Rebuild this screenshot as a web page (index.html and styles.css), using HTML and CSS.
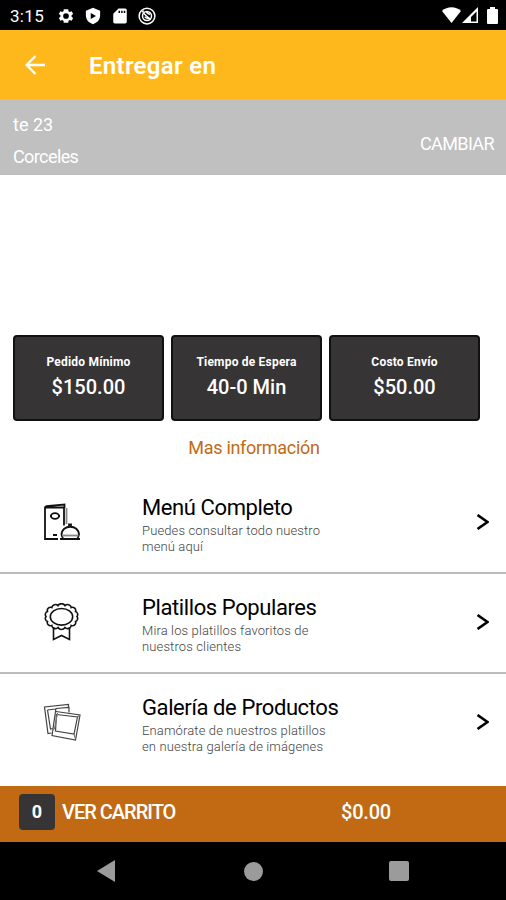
FILE: index.html
```
<!DOCTYPE html>
<html lang="es">
<head>
  <meta charset="UTF-8">
  <meta name="viewport" content="width=device-width, initial-scale=1.0">
  <title>Entregar en</title>
  <link rel="stylesheet" href="styles.css">
</head>
<body>
  <div class="status-bar">
    <span class="clock">3:15</span>
    <div class="status-icons">
      <svg width="18" height="18" viewBox="0 0 24 24"><path fill="#fff" fill-rule="evenodd" d="M19.400 13a7.500 7.500 0 0 0 0-2l2.100-1.700-2-3.500-2.500 1a7.500 7.500 0 0 0-1.700-1L15 3H9l-.3 2.800a7.500 7.500 0 0 0-1.700 1l-2.500-1-2 3.500L4.600 11a7.500 7.500 0 0 0 0 2l-2.100 1.700 2 3.500 2.500-1a7.500 7.500 0 0 0 1.700 1L9 21h6l.3-2.800a7.500 7.500 0 0 0 1.700-1l2.500 1 2-3.500zM12 8.200a3.800 3.800 0 1 1 0 7.600 3.800 3.800 0 0 1 0-7.600z"/></svg>
      <svg width="18" height="18" viewBox="0 0 24 24"><path fill="#fff" fill-rule="evenodd" d="M12 1l9.500 4v6c0 6-4 10-9.500 12-5.500-2-9.500-6-9.500-12V5zM9 8v8l7-4z"/></svg>
      <svg width="18" height="18" viewBox="0 0 24 24"><path fill="#fff" fill-rule="evenodd" d="M10 2h9c1 0 2 1 2 2v16c0 1-1 2-2 2H5c-1 0-2-1-2-2V9zM10 5v3h2V5zM13.500 5v3h2V5zM17 5v3h2V5z"/></svg>
      <svg width="18" height="18" viewBox="0 0 24 24" fill="none" stroke="#fff" stroke-width="2"><circle cx="12" cy="12" r="10.500"/><circle cx="12" cy="12" r="6"/><path d="M5 7l3-2M7 8l10 9M9 13c2 2 4 3 7 2M11 7l5 3"/></svg>
    </div>
    <div class="signal-icons">
      <svg width="19" height="16" viewBox="0 0 19 16"><path fill="#fff" d="M0 4c5-5 14-5 19 0L9.500 16z"/></svg>
      <svg width="16" height="16" viewBox="0 0 16 16"><path fill="#fff" fill-rule="evenodd" d="M0 16L16 0v16zM14.500 14.500V4.500L9 10v4.500z"/></svg>
      <svg class="battery" width="11" height="17" viewBox="0 0 11 17"><path fill="#fff" d="M3 0h5v2h2q1 0 1 1v13q0 1-1 1H1q-1 0-1-1V3q0-1 1-1h2z"/></svg>
    </div>
  </div>

  <header class="app-bar">
    <svg class="back" width="20" height="20" viewBox="0 0 20 20" fill="none" stroke="#fff" stroke-width="2.300"><path d="M20 10H2M10.500 1L1.600 10l8.900 9"/></svg>
    <h1>Entregar en</h1>
  </header>

  <section class="address">
    <div class="address-lines">
      <div><span class="street">te 23</span></div>
      <div><span class="suburb">Corceles</span></div>
    </div>
    <span class="change">CAMBIAR</span>
  </section>

  <main>
    <div class="cards">
      <div class="card">
        <span class="label">Pedido Mínimo</span>
        <span class="value">$150.00</span>
      </div>
      <div class="card">
        <span class="label">Tiempo de Espera</span>
        <span class="value">40-0 Min</span>
      </div>
      <div class="card">
        <span class="label">Costo Envío</span>
        <span class="value">$50.00</span>
      </div>
    </div>
    <div class="more"><span>Mas información</span></div>

    <div class="menu">
      <div class="item">
        <svg class="icon" width="38" height="38" viewBox="0 0 38 38" fill="none" stroke="#111" stroke-width="1.800">
          <path d="M15 36H2V4.500h19v18M2 4.500L3.500 3 21.500 1.500V5"/>
          <path stroke="#888" d="M23.500 5v16"/>
          <ellipse cx="12" cy="13" rx="4" ry="2.800"/>
          <path d="M7 13h1.500M15.500 13H17M10 32h4"/>
          <path d="M18.500 32c0-11 17.500-11 17.500 0M26 23v-1.500h2V23M17 36h20M18.500 32l1.500 3.500M36 32l-1.500 3.500"/>
          <path stroke="#888" d="M19 32.500h16.500"/>
        </svg>
        <div class="text">
          <h2 class="name">Menú Completo</h2>
          <p>Puedes consultar todo nuestro<br>menú aquí</p>
        </div>
        <svg class="chevron" width="12" height="16" viewBox="0 0 12 16" fill="none" stroke="#000" stroke-width="2.600"><path d="M.5 1L10.500 8l-10 7"/></svg>
      </div>
      <div class="item">
        <svg class="icon" width="38" height="38" viewBox="0 0 38 38" fill="none" stroke="#111" stroke-width="1.600">
          <path d="M34 13.500A3.200 3.200 0 0 1 32.500 18.500A3.200 3.200 0 0 1 28.200 22.500A3.600 3.600 0 0 1 22 24.500A4 4 0 0 1 15 24.500A3.600 3.600 0 0 1 8.800 22.500A3.200 3.200 0 0 1 4.500 18.500A3.200 3.200 0 0 1 3 13.500A3.200 3.200 0 0 1 4.500 8.500A3.200 3.200 0 0 1 8.800 4.500A3.600 3.600 0 0 1 15 2.700A4 4 0 0 1 22 2.700A3.600 3.600 0 0 1 28.200 4.500A3.200 3.200 0 0 1 32.500 8.500A3.200 3.200 0 0 1 34 13.500z"/>
          <ellipse cx="18.500" cy="13.800" rx="11.200" ry="8.300"/>
          <path d="M10.500 24v12.500l8-4 8 4V24"/>
        </svg>
        <div class="text">
          <h2 class="name">Platillos Populares</h2>
          <p>Mira los platillos favoritos de<br>nuestros clientes</p>
        </div>
        <svg class="chevron" width="12" height="16" viewBox="0 0 12 16" fill="none" stroke="#000" stroke-width="2.600"><path d="M.5 1L10.500 8l-10 7"/></svg>
      </div>
      <div class="item">
        <svg class="icon" width="38" height="38" viewBox="0 0 38 38" fill="none" stroke="#444" stroke-width="1.200">
          <path d="M12.500 8.500l.5-3 13-1v5M25.500 5V1.500L1.500 4 5 30.500l3.500-.5M4.500 7L7.500 26l2-.5M4.500 7l8-1"/>
          <path d="M13 8.500L37 12l-4.500 25L9 32.500 12.500 8.500zM13.500 11.500L34.500 14l-3.500 17-18.500-3z"/>
          <path stroke="#777" d="M14.500 10l-3 15.500L9 28M31 31l1.500 5M34.500 14L37 12"/>
        </svg>
        <div class="text">
          <h2 class="name">Galería de Productos</h2>
          <p>Enamórate de nuestros platillos<br>en nuestra galería de imágenes</p>
        </div>
        <svg class="chevron" width="12" height="16" viewBox="0 0 12 16" fill="none" stroke="#000" stroke-width="2.600"><path d="M.5 1L10.500 8l-10 7"/></svg>
      </div>
    </div>
  </main>

  <div class="cart">
    <span class="count">0</span>
    <span class="cart-label">VER CARRITO</span>
    <span class="total">$0.00</span>
  </div>

  <nav class="nav-bar">
    <svg width="18" height="22" viewBox="0 0 18 22"><path fill="#9b9b9b" d="M18 0v22L0 11z"/></svg>
    <span class="home"></span>
    <span class="recent"></span>
  </nav>
</body>
</html>
```
FILE: styles.css
```
* {
  box-sizing: border-box;
}
body {
  margin: 0;
  width: 506px;
  height: 900px;
  display: flex;
  flex-direction: column;
  overflow: hidden;
  background-color: #fff;
  font-family: Roboto, "Open Sans", sans-serif;
}
h1, h2, p {
  margin: 0;
}
span {
  white-space: nowrap;
}
svg {
  display: block;
  flex-shrink: 0;
}
.status-bar {
  height: 30px;
  display: flex;
  align-items: center;
  padding: 1px 8px 0 10px;
  background-color: #000;
  color: #fff;
}
.clock {
  width: 47px;
  font-size: 17px;
  font-weight: 400;
  letter-spacing: 0.3px;
}
.status-icons {
  display: flex;
  gap: 9px;
}
.signal-icons {
  display: flex;
  gap: 1px;
  margin-left: auto;
}
.battery {
  margin-left: 8px;
}
.app-bar {
  height: 69px;
  display: flex;
  align-items: center;
  padding-left: 25px;
  background-color: #ffb81c;
  color: #fff;
}
.app-bar h1 {
  margin-left: 44px;
  padding-top: 2px;
  font-size: 24px;
  font-weight: 600;
  letter-spacing: 0.3px;
}
.address {
  height: 76px;
  display: flex;
  align-items: center;
  justify-content: space-between;
  padding: 0 12px 0 13px;
  background-color: #c0c0c0;
  color: #fff;
  font-size: 18px;
}
.address-lines {
  margin-top: 8px;
  line-height: 32px;
}
.suburb {
  letter-spacing: -0.6px;
}
.change {
  padding-top: 12px;
  letter-spacing: -0.6px;
}
main {
  height: 611px;
  padding-top: 160px;
}
.cards {
  display: flex;
  gap: 7px;
  padding-left: 13px;
}
.card {
  width: 151px;
  height: 86px;
  padding-top: 17px;
  display: flex;
  flex-direction: column;
  align-items: center;
  border: 2px solid #111;
  border-radius: 4px;
  background-color: #373435;
  color: #fff;
}
.label {
  font-size: 12px;
  font-weight: 700;
  line-height: 16px;
  letter-spacing: 0.2px;
}
.value {
  margin-top: 4px;
  font-size: 20px;
  font-weight: 500;
  line-height: 26px;
}
.more {
  height: 52px;
  padding: 14px 0 0 2px;
  text-align: center;
  color: #c26a15;
  font-size: 18px;
  line-height: 26px;
  letter-spacing: -0.3px;
}
.menu {
  padding-top: 1px;
}
.item {
  height: 100px;
  display: flex;
  align-items: center;
  padding: 0 17px 2px 43px;
  border-bottom: 2px solid #bbb;
}
.item:last-child {
  border-bottom-color: transparent;
}
.text {
  width: 300px;
  margin-left: 61px;
}
.name {
  padding-top: 3px;
  font-size: 22px;
  font-weight: 400;
  line-height: 30px;
  letter-spacing: -0.4px;
}
.text p {
  color: #444;
  font-size: 13px;
  font-weight: 300;
  line-height: 16px;
  letter-spacing: 0.13px;
}
.chevron {
  margin-left: auto;
}
.cart {
  height: 56px;
  flex-shrink: 0;
  display: flex;
  align-items: center;
  padding: 0 0 5px 19px;
  background-color: #c26a13;
  color: #fff;
  font-size: 20px;
  font-weight: 500;
}
.count {
  width: 36px;
  height: 36px;
  border-radius: 4px;
  background-color: #373435;
  font-size: 18px;
  font-weight: 700;
  line-height: 36px;
  text-align: center;
}
.cart-label {
  width: 279px;
  margin-left: 7px;
  letter-spacing: -1px;
}
.total {
  letter-spacing: -0.2px;
}
.nav-bar {
  height: 58px;
  flex-shrink: 0;
  display: flex;
  align-items: center;
  padding-left: 97px;
  background-color: #000;
}
.home {
  width: 19px;
  height: 19px;
  margin-left: 129px;
  border-radius: 50%;
  background-color: #9b9b9b;
}
.recent {
  width: 20px;
  height: 20px;
  margin-left: 126px;
  border-radius: 2px;
  background-color: #9b9b9b;
}
```
